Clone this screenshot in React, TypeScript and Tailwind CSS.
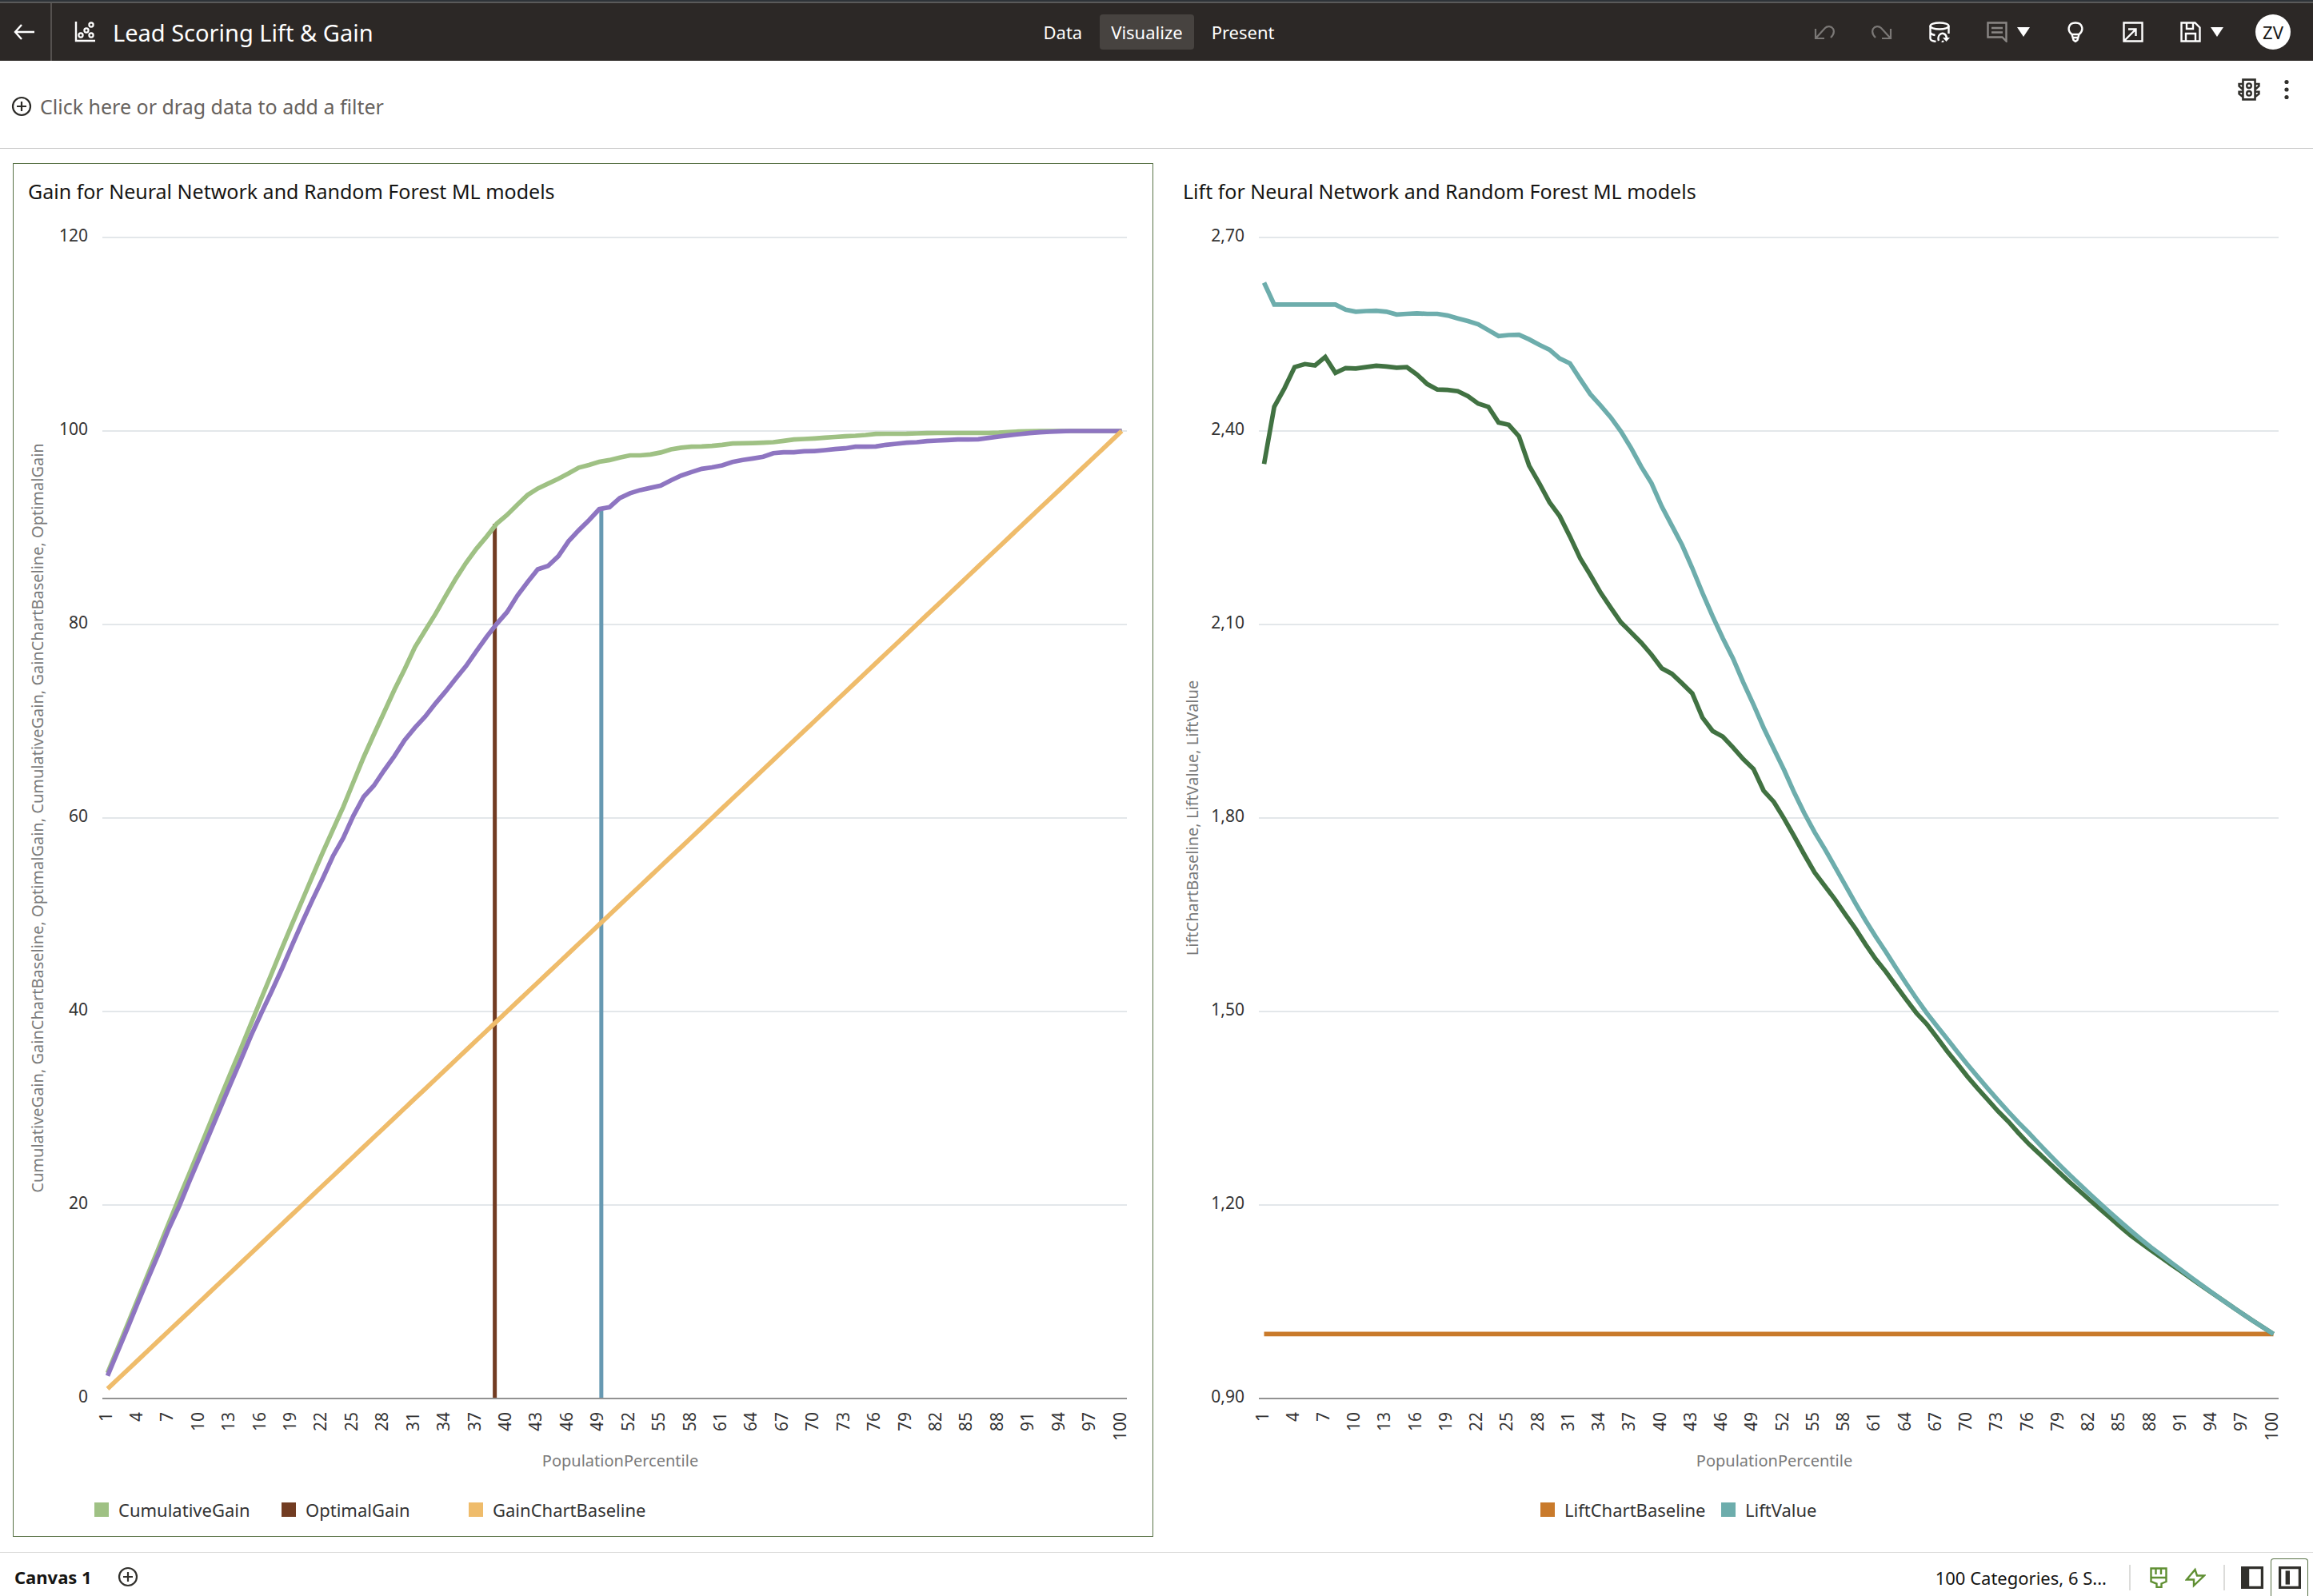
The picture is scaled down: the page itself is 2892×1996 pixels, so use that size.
import type { ReactNode } from 'react';
import { clsx } from 'clsx';

interface Line {
  values: number[];
  color: string;
}

interface Bar {
  category: number;
  value: number;
  color: string;
}

interface LegendItem {
  label: string;
  swatch: string;
}

interface ChartProps {
  label: string;
  min: number;
  max: number;
  ticks: string[];
  left: number;
  right: number;
  yTitle: string;
  lines: Line[];
  bars?: Bar[];
}

// Lift per population percentile for the first half of the curve, gain (%) for the rest
const neuralLift = [
  2.63, 2.596, 2.596, 2.596, 2.596, 2.596, 2.596, 2.596, 2.588, 2.585, 2.586, 2.5865, 2.585, 2.5806, 2.5816,
  2.5824, 2.5816, 2.5816, 2.579, 2.5745, 2.5705, 2.5654, 2.5563, 2.5472, 2.5487, 2.5492, 2.5421, 2.5335,
  2.5259, 2.5123, 2.5047, 2.4804, 2.4571, 2.4394, 2.4212, 2.3994, 2.3736, 2.3443, 2.319, 2.2831, 2.2532,
  2.2233, 2.1874, 2.149, 2.1125, 2.0786, 2.0472, 2.0103, 1.9759,
];
const neuralGainTail = [
  96.99, 97.25, 97.48, 97.48, 97.58, 97.78, 98.1, 98.27, 98.37, 98.4, 98.46, 98.57, 98.71, 98.73, 98.75,
  98.79, 98.84, 98.98, 99.12, 99.17, 99.23, 99.31, 99.38, 99.45, 99.5, 99.59, 99.7, 99.71, 99.71, 99.72,
  99.75, 99.78, 99.79, 99.79, 99.79, 99.79, 99.79, 99.79, 99.83, 99.89, 99.94, 99.97, 100, 100, 100, 100,
  100, 100, 100, 100, 100,
];
const forestLift = [
  2.3488, 2.4374, 2.4662, 2.4991, 2.5037, 2.5016, 2.5148, 2.49, 2.4976, 2.4968, 2.4991, 2.5011, 2.5001,
  2.4981, 2.4991, 2.4875, 2.4728, 2.4642, 2.4637, 2.4617, 2.4541, 2.4425, 2.4374, 2.4131, 2.4096, 2.3918,
  2.3463, 2.3185, 2.2896, 2.2679, 2.2365, 2.2026, 2.1768, 2.1495, 2.1262, 2.1034, 2.0877, 2.0715, 2.0533,
  2.0321, 2.0235, 2.0088, 1.9931, 1.9557, 1.9347, 1.9261, 1.9094, 1.8913, 1.8761,
];
const forestGainTail = [
  92.12, 93.07, 93.56, 93.89, 94.12, 94.35, 94.9, 95.4, 95.75, 96.08, 96.24, 96.45, 96.8, 97, 97.16, 97.33,
  97.71, 97.8, 97.8, 97.91, 97.92, 98.02, 98.13, 98.21, 98.37, 98.37, 98.4, 98.57, 98.68, 98.79, 98.84,
  98.95, 99.01, 99.06, 99.12, 99.12, 99.15, 99.28, 99.42, 99.56, 99.67, 99.78, 99.86, 99.92, 99.97, 100,
  100, 100, 100, 100, 100,
];

const toGain = (lift: number[], tail: number[]) => [...lift.map((v, i) => v * (i + 1)), ...tail];
const toLift = (lift: number[], tail: number[]) => [
  ...lift,
  ...tail.map((v, i) => v / (i + 1 + lift.length)),
];

const percentiles = Array.from({ length: 100 }, (_, i) => i + 1);

const PLOT_TOP = 32;
const PLOT_BOTTOM = 1484;

function Chart({ label, min, max, ticks, left, right, yTitle, lines, bars = [] }: ChartProps) {
  const inset = 6.5;
  const x = (category: number) => left + inset + ((category - 1) * (right - left - inset * 2)) / 99;
  const y = (value: number) => PLOT_BOTTOM - ((value - min) / (max - min)) * (PLOT_BOTTOM - PLOT_TOP);
  const rowHeight = (PLOT_BOTTOM - PLOT_TOP) / (ticks.length - 1);
  const middle = (PLOT_TOP + PLOT_BOTTOM) / 2;

  return (
    <svg viewBox="0 0 1424 1590" role="img" aria-label={label} className="block h-auto w-full">
      {ticks.map((tick, i) => {
        const ty = PLOT_TOP + i * rowHeight;
        const last = i === ticks.length - 1;
        return (
          <g key={tick}>
            <line x1={left} x2={right} y1={ty} y2={ty} stroke={last ? '#929292' : '#e3e7ea'} strokeWidth="2" />
            <text x={left - 18} y={ty + 5} textAnchor="end" fontSize="21" fill="#333333">
              {tick}
            </text>
          </g>
        );
      })}

      {percentiles
        .filter((p) => p % 3 === 1)
        .map((p) => (
          <text
            key={p}
            transform={`translate(${x(p) + 5} 1501) rotate(-90)`}
            textAnchor="end"
            fontSize="21"
            fill="#333333"
          >
            {p}
          </text>
        ))}

      {bars.map((bar) => (
        <rect
          key={bar.category}
          x={x(bar.category) - 2.5}
          y={y(bar.value)}
          width="5"
          height={PLOT_BOTTOM - 1 - y(bar.value)}
          fill={bar.color}
        />
      ))}
      {lines.map((line) => (
        <polyline
          key={line.color}
          points={line.values.map((v, i) => `${x(i + 1).toFixed(1)},${y(v).toFixed(1)}`).join(' ')}
          fill="none"
          stroke={line.color}
          strokeWidth="5.7"
        />
      ))}

      <text x={(left + right) / 2 + 7} y="1569" textAnchor="middle" fontSize="20" fill="#7a7a7a">
        PopulationPercentile
      </text>
      <text transform={`translate(37 ${middle}) rotate(-90)`} textAnchor="middle" fontSize="20" fill="#7a7a7a">
        {yTitle}
      </text>
    </svg>
  );
}

function Legend({ items, className, itemClassName }: { items: LegendItem[]; className: string; itemClassName: string }) {
  return (
    <ul className={clsx('flex h-[66px] items-center', className)}>
      {items.map((item) => (
        <li key={item.label} className={clsx('flex items-center gap-3 text-[22px] leading-7 text-[#333333]', itemClassName)}>
          <span className={clsx('size-[18px] shrink-0', item.swatch)} />
          {item.label}
        </li>
      ))}
    </ul>
  );
}

function Panel({ title, selected, children }: { title: string; selected?: boolean; children: ReactNode }) {
  return (
    <section className={clsx('min-w-0 border', selected ? 'border-[#587246]' : 'border-transparent')}>
      <h2 className="flex h-[60px] items-center px-[18px] pt-2 text-[25px] leading-8 text-[#161513]">{title}</h2>
      {children}
    </section>
  );
}

function Icon({ size = 26, className, children }: { size?: number; className?: string; children: ReactNode }) {
  return (
    <svg
      viewBox="0 0 26 26"
      width={size}
      height={size}
      fill="none"
      stroke="currentColor"
      strokeWidth="2.4"
      aria-hidden="true"
      className={clsx('shrink-0', className)}
    >
      {children}
    </svg>
  );
}

function Caret() {
  return (
    <svg viewBox="0 0 16 12" width="16" height="12" fill="currentColor" aria-hidden="true">
      <path d="M0 0h16L8 12z" />
    </svg>
  );
}

function CirclePlus() {
  return (
    <Icon>
      <circle cx="13" cy="13" r="11" strokeWidth="2.2" />
      <path d="M13 7v12M7 13h12" strokeWidth="2.2" />
    </Icon>
  );
}

function Header() {
  return (
    <header className="border-t-2 border-[#2e3338] bg-[#2c2826] text-white">
      <div className="grid h-[74px] grid-cols-[1fr_auto_1fr] items-center border-t-2 border-[#5a5a5a]">
        <div className="flex h-full items-center">
          <button type="button" aria-label="Back" className="flex h-full w-[65px] items-center border-r-2 border-[#55514f] pl-[17px]">
            <Icon>
              <path d="M26 13H2M10 4 2 13l8 9" />
            </Icon>
          </button>
          <Icon className="ml-7">
            <path d="M2 0v24h24" />
            <circle cx="8" cy="17" r="2.6" strokeWidth="2.2" />
            <circle cx="15" cy="11" r="2.6" strokeWidth="2.2" />
            <circle cx="21" cy="4" r="2.6" strokeWidth="2.2" />
            <circle cx="21" cy="17" r="2.6" strokeWidth="2.2" />
          </Icon>
          <h1 className="ml-[22px] pt-0.5 text-[29px] leading-10">Lead Scoring Lift &amp; Gain</h1>
        </div>

        <nav className="flex gap-2 pl-1.5 text-[22px] leading-7">
          <button type="button" className="h-11 rounded px-3.5">Data</button>
          <button type="button" aria-current="page" className="h-11 rounded bg-[#474340] px-3.5">Visualize</button>
          <button type="button" className="h-11 rounded px-3.5">Present</button>
        </nav>

        <div className="flex items-center justify-end pr-7">
          <button type="button" aria-label="Undo" disabled className="mr-[46px] text-[#7b7876]">
            <Icon>
              <path d="M2 9v12h11M3 20 14 8a6.500 6.500 0 0 1 10 1c2 4 0 8-3 11" strokeWidth="2.2" />
            </Icon>
          </button>
          <button type="button" aria-label="Redo" disabled className="mr-[46px] text-[#7b7876]">
            <Icon>
              <path d="M24 9v12H13M23 20 12 8A6.500 6.500 0 0 0 2 9c-2 4 0 8 3 11" strokeWidth="2.2" />
            </Icon>
          </button>
          <button type="button" aria-label="Refresh data" className="mr-[46px]">
            <Icon>
              <ellipse cx="13" cy="5.500" rx="11.500" ry="4" />
              <path d="M1.500 5.500V21c0 2 3 3.500 7 4M24.500 5.500V15M1.500 14c1 1.500 3 2.500 6 3" />
              <path d="M12 24c-2-6 2-10 6-9 3 1 4 4 4 7M16 26l2-2" />
              <path d="M17 20h9l-4.500 5z" fill="currentColor" stroke="none" />
            </Icon>
          </button>
          <button type="button" aria-label="Comments" className="mr-11 flex items-center gap-3">
            <Icon className="text-[#8a8785]">
              <path d="M1.500 1.500h23v23l-5-5h-18zM6 8h14M6 13.500h14" />
            </Icon>
            <Caret />
          </button>
          <button type="button" aria-label="Insights" className="mr-[46px]">
            <Icon>
              <path d="M8.500 16C2 11 4 1.500 13 1.500S24 11 17.500 16l-2 7-2.500 2-2.500-2zM8.500 16h9M9.500 20h7" />
            </Icon>
          </button>
          <button type="button" aria-label="Open in new window" className="mr-[46px]">
            <Icon>
              <path d="M1.500 1.500h23v23h-23zM2 24 17 9M7 9.500h9.500V18" />
            </Icon>
          </button>
          <button type="button" aria-label="Save" className="mr-10 flex items-center gap-3">
            <Icon>
              <path d="M1.500 1.500h17l6 6v17h-23zM8 2v7h8V2M7 24v-9h12v9" />
            </Icon>
            <Caret />
          </button>
          <button type="button" className="size-11 rounded-full bg-white text-[22px] leading-7 text-[#161513]">ZV</button>
        </div>
      </div>
    </header>
  );
}

function FilterBar() {
  return (
    <div className="flex h-[110px] items-center justify-between border-b border-[#c6c6c5] pr-5 pl-3.5">
      <button type="button" className="flex items-center gap-2.5 pt-1 text-[25px] leading-8 text-[#67625d]">
        <span className="text-[#2b2a27]">
          <CirclePlus />
        </span>
        Click here or drag data to add a filter
      </button>
      <div className="flex items-center gap-5 pb-[38px] text-[#31302c]">
        <button type="button" aria-label="Auto-apply filters">
          <Icon size={28}>
            <path d="M6 1.500h14v23H6zM6 6.500H1.500V9L6 13M6 15.500H1.500V18L6 21.500M20 6.500h4.500V9L20 13M20 15.500h4.500V18L20 21.500" />
            <circle cx="13" cy="8.500" r="2.600" strokeWidth="2.200" />
            <circle cx="13" cy="17.500" r="2.600" strokeWidth="2.200" />
          </Icon>
        </button>
        <button type="button" aria-label="Filter menu">
          <Icon>
            <g fill="currentColor" stroke="none">
              <circle cx="13" cy="3.500" r="2.600" />
              <circle cx="13" cy="13" r="2.600" />
              <circle cx="13" cy="22.500" r="2.600" />
            </g>
          </Icon>
        </button>
      </div>
    </div>
  );
}

function Footer() {
  return (
    <footer className="flex h-[55px] items-stretch justify-between border-t border-[#dcdcda] pr-1.5 text-[22px] leading-7 text-[#161513]">
      <div className="flex items-center gap-8 pt-1.5 pl-[18px]">
        <button type="button" className="font-bold">Canvas 1</button>
        <button type="button" aria-label="Add canvas" className="text-[#31302c]">
          <CirclePlus />
        </button>
      </div>
      <div className="flex items-stretch">
        <div className="flex items-center pt-2">
          <span>100 Categories, 6 S...</span>
          <span className="mr-[22px] ml-7 h-8 w-0.5 bg-[#dcdcda]" />
          <button type="button" aria-label="Brushing" className="mr-5 text-[#5f8f32]">
            <Icon>
              <path d="M3.500 1.500h19V18l-6 2.500v4.500h-6v-4.500l-7-2.500zM3.500 13h19M9.500 2v7M16 2v7" />
            </Icon>
          </button>
          <button type="button" aria-label="Auto-refresh" className="text-[#5f8f32]">
            <Icon>
              <path d="M12.500 3 2 15.500h9V23L24 10.500h-9z" />
            </Icon>
          </button>
          <span className="mr-5 ml-[22px] h-8 w-0.5 bg-[#dcdcda]" />
          <button type="button" aria-label="Data panel" className="mr-[9px] text-[#31302c]">
            <Icon size={28}>
              <path d="M1.500 1.500h23v23h-23z" strokeWidth="3" />
              <path d="M1 1h8.500v24H1z" fill="currentColor" stroke="none" />
            </Icon>
          </button>
        </div>
        <button
          type="button"
          aria-label="Grammar panel"
          aria-pressed="true"
          className="mt-[7px] flex w-[47px] items-center justify-center rounded-t border border-b-0 border-[#587246] text-[#31302c]"
        >
          <Icon size={28}>
            <path d="M1.500 1.500h23v23h-23z" strokeWidth="3" />
            <path d="M10.500 5v16" strokeWidth="5" />
          </Icon>
        </button>
      </div>
    </footer>
  );
}

export default function App() {
  return (
    <div className="flex min-h-screen flex-col bg-white font-['Noto_Sans',sans-serif]">
      <Header />
      <FilterBar />

      <main className="grid grow grid-cols-2 items-start gap-[18px] pt-[18px] pr-1.5 pb-[19px] pl-4">
        <Panel title="Gain for Neural Network and Random Forest ML models" selected>
          <Chart
            label="Gain by population percentile"
            min={0}
            max={120}
            ticks={['120', '100', '80', '60', '40', '20', '0']}
            left={111}
            right={1392}
            yTitle="CumulativeGain, GainChartBaseline, OptimalGain, CumulativeGain, GainChartBaseline, OptimalGain"
            bars={[
              { category: 38.8, value: 90.4, color: '#723c22' },
              { category: 49.2, value: 91.9, color: '#6799b2' },
            ]}
            lines={[
              { values: toGain(neuralLift, neuralGainTail), color: '#9fc184' },
              { values: toGain(forestLift, forestGainTail), color: '#8e75c1' },
              { values: percentiles, color: '#efbc6b' },
            ]}
          />
          <Legend
            className="pl-[101px]"
            itemClassName="w-[234px]"
            items={[
              { label: 'CumulativeGain', swatch: 'bg-[#9fc184]' },
              { label: 'OptimalGain', swatch: 'bg-[#723c22]' },
              { label: 'GainChartBaseline', swatch: 'bg-[#efbc6b]' },
            ]}
          />
        </Panel>

        <Panel title="Lift for Neural Network and Random Forest ML models">
          <Chart
            label="Lift by population percentile"
            min={0.9}
            max={2.7}
            ticks={['2,70', '2,40', '2,10', '1,80', '1,50', '1,20', '0,90']}
            left={113}
            right={1388}
            yTitle="LiftChartBaseline, LiftValue, LiftValue"
            lines={[
              { values: percentiles.map(() => 1), color: '#c97a2b' },
              { values: toLift(forestLift, forestGainTail), color: '#417242' },
              { values: toLift(neuralLift, neuralGainTail), color: '#6dadac' },
            ]}
          />
          <Legend
            className="pl-[465px]"
            itemClassName="w-[226px]"
            items={[
              { label: 'LiftChartBaseline', swatch: 'bg-[#c97a2b]' },
              { label: 'LiftValue', swatch: 'bg-[#6dadac]' },
            ]}
          />
        </Panel>
      </main>

      <Footer />
    </div>
  );
}
